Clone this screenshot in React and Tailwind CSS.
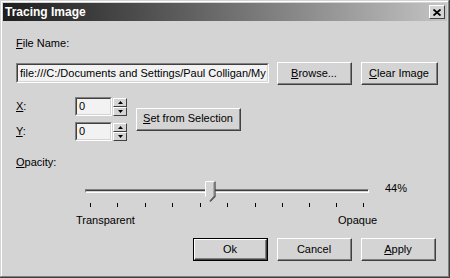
import React from "react";

const font = { fontFamily: '"Liberation Sans", Arial, sans-serif' };

// classic raised 3D button
function Btn({ children, w, def }) {
  return (
    <div className={`${def ? "border border-black" : ""} ${w} h-[23px]`}>
      <div className="h-full border-t border-l border-t-white border-l-white border-r border-b border-r-[#404040] border-b-[#404040] bg-[#d4d4d4]">
        <div className="h-full flex items-center justify-center border-r border-b border-r-[#808080] border-b-[#808080] text-[11px] text-black">
          {children}
        </div>
      </div>
    </div>
  );
}

function Sunken({ className, children }) {
  return (
    <div className={`border-t border-l border-t-[#808080] border-l-[#808080] border-r border-b border-r-white border-b-white ${className}`}>
      <div className="h-full border-t border-l border-t-[#404040] border-l-[#404040] border-r border-b border-r-[#d4d4d4] border-b-[#d4d4d4] bg-[#f2f2f2] flex items-center pl-[2px] text-[11px] text-black overflow-hidden whitespace-nowrap">
        {children}
      </div>
    </div>
  );
}

function SpinHalf({ up }) {
  return (
    <div className="h-[9px] w-[14px] bg-[#d4d4d4] border-t border-l border-t-white border-l-white border-r border-b border-r-[#404040] border-b-[#404040] flex items-center justify-center">
      <svg width="5" height="3" viewBox="0 0 5 3">
        {up ? <path d="M2.5 0L5 3H0z" fill="#000" /> : <path d="M0 0H5L2.5 3z" fill="#000" />}
      </svg>
    </div>
  );
}

function Spin({ label, mt }) {
  return (
    <div className={`flex items-center ${mt}`}>
      <span className="w-[59px] text-[11px]"><u>{label}</u>:</span>
      <Sunken className="w-[37px] h-[19px]">0</Sunken>
      <div className="flex flex-col ml-[1px]">
        <SpinHalf up />
        <SpinHalf />
      </div>
    </div>
  );
}

const ticks = [87, 114, 142, 169, 197, 224, 252, 279, 306, 333, 360];

export default function App() {
  return (
    <div style={font} className="w-[450px] h-[278px] overflow-hidden bg-[#404040]">
      <div className="w-[449px] h-[277px] border-t border-l border-t-[#d4d4d4] border-l-[#d4d4d4] border-r border-b border-r-[#808080] border-b-[#808080] bg-[#d4d4d4]">
        <div className="h-full border-t border-l border-t-white border-l-white p-[1px] flex flex-col">
          {/* title bar */}
          <div className="h-[18px] flex items-center justify-between bg-gradient-to-r from-[#1e1e1e] via-[#6e6e6e] to-[#c4c4c4] pl-[2px] pr-[2px]">
            <span className="text-white font-bold text-[12px]">Tracing Image</span>
            <div className="w-[16px] h-[14px] bg-[#d4d4d4] border-t border-l border-t-white border-l-white border-r border-b border-r-[#404040] border-b-[#404040] flex items-center justify-center">
              <svg width="8" height="7" viewBox="0 0 8 7">
                <path d="M0.5 0.5L7.5 6.5M7.5 0.5L0.5 6.5" stroke="#000" strokeWidth="1.8" />
              </svg>
            </div>
          </div>

          <div className="pl-[13px] text-[11px] text-black">
            <div className="mt-[15px] leading-[14px]"><u>F</u>ile Name:</div>

            <div className="mt-[12px] flex items-start">
              <Sunken className="w-[253px] h-[20px] mt-[1px]">file:///C:/Documents and Settings/Paul Colligan/My Images/trace.gif</Sunken>
              <div className="ml-[8px]"><Btn w="w-[75px]"><span><u>B</u>rowse...</span></Btn></div>
              <div className="ml-[9px]"><Btn w="w-[77px]"><span><u>C</u>lear Image</span></Btn></div>
            </div>

            <div className="flex items-center mt-[12px]">
              <div className="flex flex-col">
                <Spin label="X" />
                <Spin label="Y" mt="mt-[6px]" />
              </div>
              <div className="ml-[9px]"><Btn w="w-[105px]"><span><u>S</u>et from Selection</span></Btn></div>
            </div>

            <div className="mt-[14px] leading-[14px]"><u>O</u>pacity:</div>

            {/* slider */}
            <div className="relative h-[50px] -ml-[13px] mt-[6px]">
              <div className="absolute left-[82px] top-[14px] w-[284px] h-[4px] border-t border-l border-t-[#808080] border-l-[#808080] border-r border-b border-r-white border-b-white">
                <div className="h-full border-t border-t-[#404040]" />
              </div>
              <svg className="absolute left-[202px] top-[6px]" width="11" height="22" viewBox="0 0 11 22">
                <path d="M0.5 0.5H10V15.5L5.5 21L0.5 15.5Z" fill="#d4d4d4" />
                <path d="M0.5 15.5V0.5H10" stroke="#fff" fill="none" />
                <path d="M10 0.5V15.5L5 20.5" stroke="#404040" fill="none" strokeWidth="1.2" />
                <path d="M9 1.5V15L5 19.5" stroke="#808080" fill="none" />
              </svg>
              <span className="absolute left-[382px] top-[5px] text-[11px]">44%</span>
              {ticks.map((x) => (
                <div key={x} className="absolute top-[28px] w-[1px] h-[4px] bg-black" style={{ left: x }} />
              ))}
              <span className="absolute left-[73px] top-[37px]">Transparent</span>
              <span className="absolute left-[335px] top-[37px]">Opaque</span>
            </div>

            <div className="mt-[13px] flex justify-end pr-[11px] gap-[9px]">
              <Btn w="w-[75px]" def><span>Ok</span></Btn>
              <Btn w="w-[75px]"><span>Cancel</span></Btn>
              <Btn w="w-[75px]"><span><u>A</u>pply</span></Btn>
            </div>
          </div>
        </div>
      </div>
    </div>
  );
}
